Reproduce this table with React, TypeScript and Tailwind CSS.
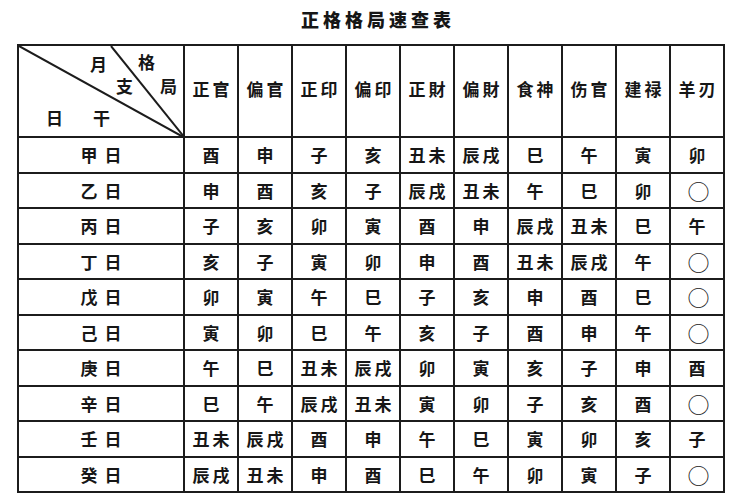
import React from "react";

const cols = ["正官", "偏官", "正印", "偏印", "正財", "偏財", "食神", "伤官", "建禄", "羊刃"];

const rows: [string, string[]][] = [
  ["甲日", ["酉", "申", "子", "亥", "丑未", "辰戌", "巳", "午", "寅", "卯"]],
  ["乙日", ["申", "酉", "亥", "子", "辰戌", "丑未", "午", "巳", "卯", "○"]],
  ["丙日", ["子", "亥", "卯", "寅", "酉", "申", "辰戌", "丑未", "巳", "午"]],
  ["丁日", ["亥", "子", "寅", "卯", "申", "酉", "丑未", "辰戌", "午", "○"]],
  ["戊日", ["卯", "寅", "午", "巳", "子", "亥", "申", "酉", "巳", "○"]],
  ["己日", ["寅", "卯", "巳", "午", "亥", "子", "酉", "申", "午", "○"]],
  ["庚日", ["午", "巳", "丑未", "辰戌", "卯", "寅", "亥", "子", "申", "酉"]],
  ["辛日", ["巳", "午", "辰戌", "丑未", "寅", "卯", "子", "亥", "酉", "○"]],
  ["壬日", ["丑未", "辰戌", "酉", "申", "午", "巳", "寅", "卯", "亥", "子"]],
  ["癸日", ["辰戌", "丑未", "申", "酉", "巳", "午", "卯", "寅", "子", "○"]],
];

const cell = "flex items-center justify-center border-r-2 border-b-2 border-[#1c1c1c]";

export default function App() {
  return (
    <div
      className="w-[750px] h-[500px] bg-white text-[#161616] overflow-hidden"
      style={{ fontFamily: '"Noto Sans CJK SC", "Noto Sans", sans-serif' }}
    >
      <h1 className="pt-[7px] h-[44px] text-center text-[18px] leading-[24px] font-black tracking-[4px] pl-[6px]">
        正格格局速查表
      </h1>

      <div className="ml-[17px] w-[708px] grid grid-cols-[166px_repeat(10,54px)] grid-rows-[92px_repeat(10,35.5px)] border-l-2 border-t-2 border-[#1c1c1c] text-[17px] font-bold">
        {/* corner header: 月支 / 格局 / 日干 split by diagonals */}
        <div className="relative border-r-2 border-b-2 border-[#1c1c1c] flex flex-col pt-[7px] leading-[22px]">
          <svg className="absolute inset-0" width="166" height="92" viewBox="0 0 166 92">
            <line x1="0" y1="0" x2="166" y2="92" stroke="#1c1c1c" strokeWidth="2" />
            <line x1="92" y1="0" x2="166" y2="92" stroke="#1c1c1c" strokeWidth="2" />
          </svg>
          <div className="flex pl-[71px] gap-[31px]">
            <span>月</span>
            <span className="-mt-[2px]">格</span>
          </div>
          <div className="flex pl-[97px] gap-[27px]">
            <span>支</span>
            <span>局</span>
          </div>
          <div className="flex pl-[27px] gap-[30px] mt-[10px]">
            <span>日</span>
            <span>干</span>
          </div>
        </div>
        {cols.map((c) => (
          <div key={c} className={`${cell} tracking-[3px] pl-[3px] pb-[4px]`}>
            {c}
          </div>
        ))}

        {rows.map(([day, vals]) => (
          <React.Fragment key={day}>
            <div className={`${cell} tracking-[7px] pl-[7px]`}>{day}</div>
            {vals.map((v, i) => (
              <div key={i} className={`${cell} tracking-[3px] pl-[3px]`}>
                {v === "○" ? <span className="text-[22px] font-normal tracking-normal">○</span> : v}
              </div>
            ))}
          </React.Fragment>
        ))}
      </div>
    </div>
  );
}
